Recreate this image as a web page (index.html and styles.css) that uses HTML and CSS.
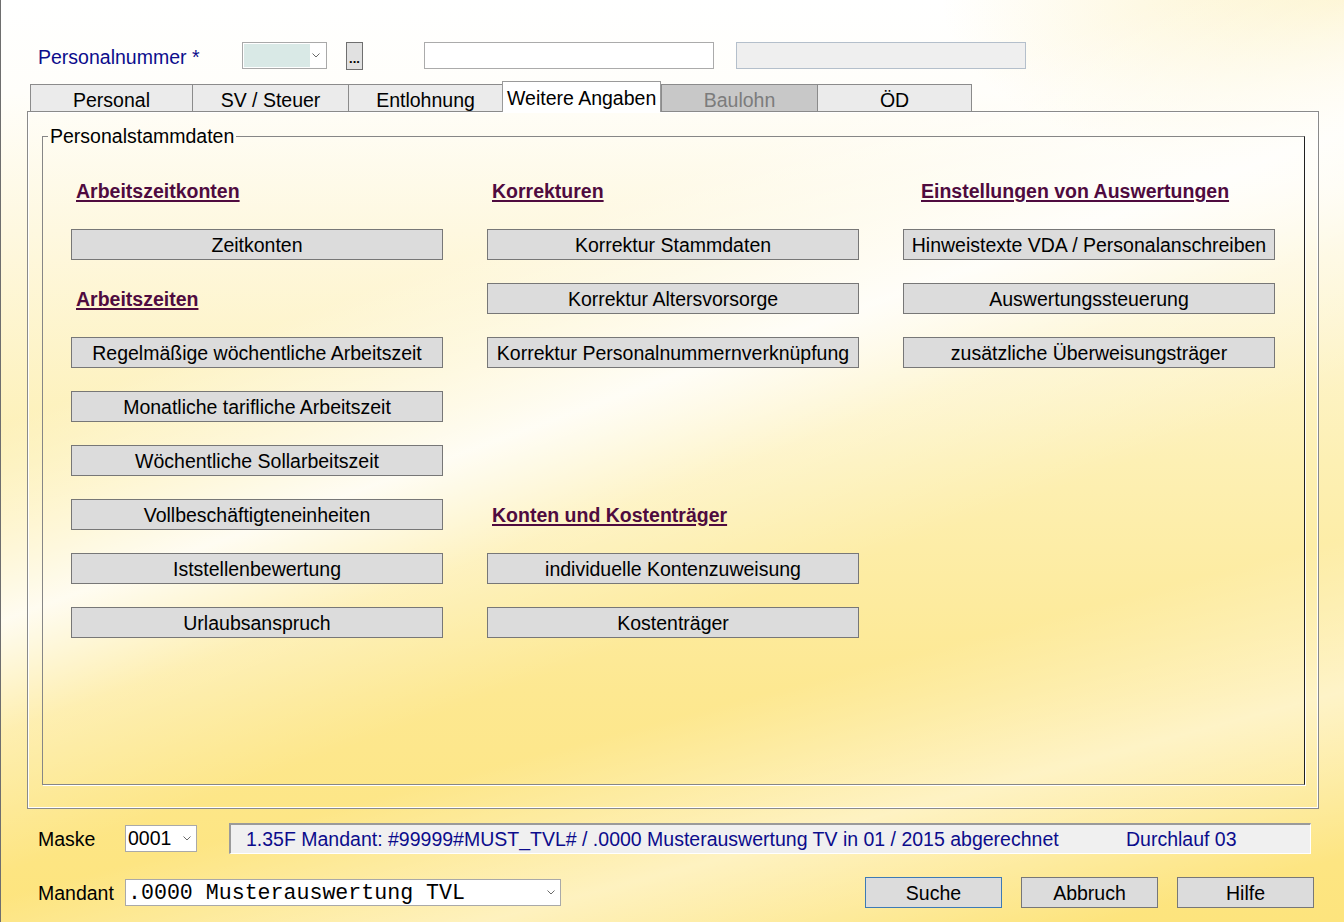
FILE: index.html
```html
<!DOCTYPE html>
<html lang="de">
<head>
    <meta charset="UTF-8">
    <title>Personalstammdaten - Weitere Angaben</title>
    <link rel="stylesheet" href="styles.css">
</head>
<body>
    <div class="window">
        <div class="head-row">
            <label class="req-label">Personalnummer *</label>
            <div class="combo combo-pnr">
                <span class="combo-value"></span>
                <svg class="chev" width="8" height="5" viewBox="0 0 8 5"><path d="M0.5 0.5 L4 4 L7.5 0.5" fill="none" stroke="#6a6a6a" stroke-width="1"/></svg>
            </div>
            <button class="dots-btn">...</button>
            <div class="field field-name"></div>
            <div class="field field-info"></div>
        </div>

        <div class="tabs">
            <div class="tab tab-personal">Personal</div>
            <div class="tab tab-sv">SV / Steuer</div>
            <div class="tab tab-lohn">Entlohnung</div>
            <div class="tab tab-active">Weitere Angaben</div>
            <div class="tab tab-bau tab-disabled">Baulohn</div>
            <div class="tab tab-oed">ÖD</div>
        </div>

        <div class="tab-panel">
            <fieldset class="group">
                <legend>Personalstammdaten</legend>
                <div class="link-grid">
                    <!-- Spalte 1 -->
                    <a href="#" class="section-link">Arbeitszeitkonten</a>
                    <button class="cmd">Zeitkonten</button>
                    <a href="#" class="section-link">Arbeitszeiten</a>
                    <button class="cmd">Regelmäßige wöchentliche Arbeitszeit</button>
                    <button class="cmd">Monatliche tarifliche Arbeitszeit</button>
                    <button class="cmd">Wöchentliche Sollarbeitszeit</button>
                    <button class="cmd">Vollbeschäftigteneinheiten</button>
                    <button class="cmd">Iststellenbewertung</button>
                    <button class="cmd">Urlaubsanspruch</button>

                    <!-- Spalte 2 -->
                    <a href="#" class="section-link">Korrekturen</a>
                    <button class="cmd">Korrektur Stammdaten</button>
                    <button class="cmd">Korrektur Altersvorsorge</button>
                    <button class="cmd">Korrektur Personalnummernverknüpfung</button>
                    <span></span>
                    <span></span>
                    <a href="#" class="section-link">Konten und Kostenträger</a>
                    <button class="cmd">individuelle Kontenzuweisung</button>
                    <button class="cmd">Kostenträger</button>

                    <!-- Spalte 3 -->
                    <a href="#" class="section-link section-link-wide">Einstellungen von Auswertungen</a>
                    <button class="cmd">Hinweistexte VDA / Personalanschreiben</button>
                    <button class="cmd">Auswertungssteuerung</button>
                    <button class="cmd">zusätzliche Überweisungsträger</button>
                </div>
            </fieldset>
        </div>

        <div class="foot-row mask-row">
            <span class="foot-label">Maske</span>
            <div class="combo combo-mask">
                <span>0001</span>
                <svg class="chev" width="8" height="5" viewBox="0 0 8 5"><path d="M0.5 0.5 L4 4 L7.5 0.5" fill="none" stroke="#6a6a6a" stroke-width="1"/></svg>
            </div>
            <div class="status">
                <span class="status-main">1.35F Mandant: #99999#MUST_TVL# / .0000 Musterauswertung TV in 01 / 2015 abgerechnet</span>
                <span>Durchlauf 03</span>
            </div>
        </div>

        <div class="foot-row client-row">
            <span class="foot-label">Mandant</span>
            <div class="combo combo-client">
                <span>.0000 Musterauswertung TVL</span>
                <svg class="chev" width="8" height="5" viewBox="0 0 8 5"><path d="M0.5 0.5 L4 4 L7.5 0.5" fill="none" stroke="#6a6a6a" stroke-width="1"/></svg>
            </div>
            <div class="actions">
                <button class="action action-default">Suche</button>
                <button class="action">Abbruch</button>
                <button class="action">Hilfe</button>
            </div>
        </div>
    </div>
</body>
</html>
```

FILE: styles.css
```css
* {
    box-sizing: border-box;
}

body {
    margin: 0;
    font-family: "Liberation Sans", Arial, sans-serif;
    font-size: 19.5px;
    color: #000;
    background: #fff;
}

button {
    font-family: inherit;
    font-size: inherit;
    color: #000;
    cursor: pointer;
}

.window {
    width: 1344px;
    height: 922px;
    overflow: hidden;
    border-left: 1px solid #6e6e6e;
    background:
        linear-gradient(160deg, rgba(255, 255, 255, 0) 30%, rgba(255, 255, 255, 0.85) 44%, rgba(255, 255, 255, 0.3) 52%, rgba(255, 255, 255, 0) 62%),
        linear-gradient(165deg, rgba(255, 255, 255, 0) 70%, rgba(255, 255, 255, 0.5) 82%, rgba(255, 255, 255, 0) 95%),
        radial-gradient(ellipse 30% 20% at 100% 0%, rgba(250, 225, 120, 0.4), rgba(250, 225, 120, 0)),
        linear-gradient(180deg, #ffffff 0%, #fffefa 10%, #fef8e0 25%, #fdf0b4 50%, #fde891 75%, #fde47d 100%);
}

/* Kopfzeile mit Personalnummer */
.head-row {
    display: flex;
    align-items: flex-start;
    height: 28px;
    margin-top: 42px;
    padding-left: 37px;
}

.req-label {
    width: 204px;
    padding-top: 2px;
    line-height: 27px;
    color: #0c0c8c;
}

.combo {
    display: flex;
    align-items: center;
    height: 27px;
    border: 1px solid #a9a9a9;
    background: #fff;
}

.chev {
    margin-left: auto;
    margin-right: 5px;
    flex: none;
}

.combo-pnr {
    width: 85px;
    padding: 1px;
}

.combo-pnr .combo-value {
    width: 66px;
    height: 100%;
    background: #d9e9e6;
}

.dots-btn {
    display: flex;
    align-items: flex-end;
    justify-content: center;
    width: 17px;
    height: 28px;
    margin-left: 19px;
    padding: 0 0 5px;
    border: 1px solid #6f6f6f;
    background: #e1e1e1;
    font-size: 13px;
    font-weight: bold;
    line-height: 10px;
}

.field {
    width: 290px;
    height: 27px;
    border: 1px solid #ababab;
    background: #fff;
}

.field-name {
    margin-left: 61px;
}

.field-info {
    margin-left: 22px;
    background: #efefef;
    border-color: #b4bfcb;
}

/* Registerkarten */
.tabs {
    display: flex;
    align-items: flex-end;
    height: 30px;
    margin-top: 11px;
    padding-left: 29px;
}

.tab {
    height: 27px;
    padding-top: 1px;
    border: 1px solid #8b8b8b;
    border-bottom: 0;
    border-right: 0;
    background: #ebebeb;
    text-align: center;
    line-height: 29px;
}

.tab-personal { width: 162px; }
.tab-sv { width: 156px; }
.tab-lohn { width: 154px; }
.tab-bau { width: 156px; }
.tab-oed { width: 155px; border-right: 1px solid #8b8b8b; }

.tab-active {
    position: relative;
    z-index: 1;
    width: 159px;
    height: 31px;
    margin-bottom: -1px;
    padding: 1px 0 0 4px;
    border-right: 1px solid #9a9a9a;
    border-color: #9a9a9a;
    background: #fff;
    text-align: left;
    line-height: 30px;
}

.tab-disabled {
    background: #c8c8c8;
    color: #7c7c7c;
}

.tab-panel {
    display: flex;
    flex-direction: column;
    width: 1292px;
    height: 698px;
    margin-left: 26px;
    padding: 13px 13px 23px 14px;
    border: 1px solid #8a8a8a;
    box-shadow: inset 1px 1px 0 #fff, inset -1px -1px 0 #fff;
}

.group {
    flex: 1;
    min-width: 0;
    margin: 0;
    padding: 0;
    border: 1px solid #868686;
    border-right-color: #202020;
    box-shadow: 1px 1px 0 #fff;
}

.group legend {
    margin-left: 5px;
    padding: 0 2px;
    line-height: 22px;
}

.link-grid {
    display: grid;
    grid-template-columns: repeat(3, 372px);
    grid-template-rows: repeat(9, 31px);
    grid-auto-flow: column;
    column-gap: 44px;
    row-gap: 23px;
    margin: 28px 0 0 28px;
}

.section-link {
    display: flex;
    align-items: center;
    padding: 1px 0 0 5px;
    color: #4f0b3f;
    font-weight: bold;
    text-decoration: underline;
    text-decoration-thickness: 2px;
    text-underline-offset: 2px;
}

.section-link-wide {
    padding-left: 18px;
}

.cmd {
    height: 31px;
    padding: 2px 0 0;
    border: 1px solid #777;
    background: #dcdcdc;
}

/* Fußbereich */
.foot-row {
    display: flex;
    align-items: center;
    height: 31px;
    padding-left: 37px;
}

.mask-row {
    margin-top: 14px;
}

.client-row {
    margin-top: 23px;
}

.foot-label {
    width: 87px;
    padding-top: 2px;
}

.combo-mask {
    width: 72px;
    padding-left: 2px;
}

.status {
    display: flex;
    align-items: center;
    width: 1082px;
    height: 31px;
    margin-left: 32px;
    padding: 1px 0 0 15px;
    border-top: 2px solid #9a9a9a;
    border-left: 2px solid #9a9a9a;
    border-right: 1px solid #fff;
    border-bottom: 1px solid #fff;
    background: #f0f0f0;
    color: #0c0c8c;
}

.status-main {
    width: 880px;
}

.combo-client {
    width: 436px;
    padding-left: 2px;
    font-family: "Liberation Mono", "DejaVu Sans Mono", monospace;
    font-size: 21.6px;
}

.actions {
    display: flex;
    gap: 19px;
    margin-left: auto;
    margin-right: 30px;
}

.action {
    width: 137px;
    height: 31px;
    padding: 2px 0 0;
    border: 1px solid #777;
    background: #dcdcdc;
}

.action-default {
    border-color: #3d7ab5;
}
```
